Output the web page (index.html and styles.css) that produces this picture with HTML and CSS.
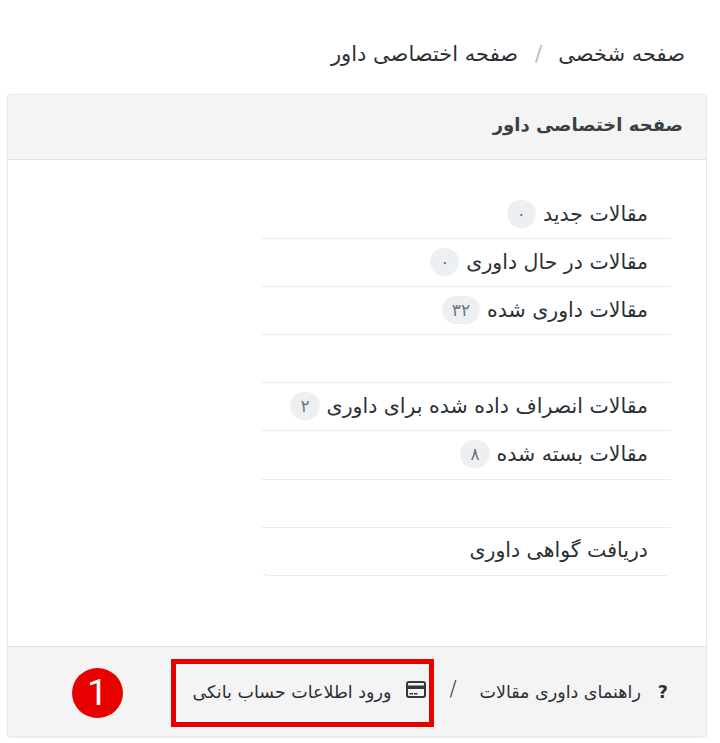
FILE: index.html
```html
<!DOCTYPE html>
<html lang="fa" dir="rtl">
<head>
    <meta charset="UTF-8">
    <meta name="viewport" content="width=device-width, initial-scale=1.0">
    <title>صفحه اختصاصی داور</title>
    <link rel="stylesheet" href="styles.css">
</head>
<body>
    <nav class="breadcrumb">
        <a href="#">صفحه شخصی</a>
        <span class="breadcrumb-sep">/</span>
        <span>صفحه اختصاصی داور</span>
    </nav>

    <div class="card">
        <div class="card-header">صفحه اختصاصی داور</div>
        <div class="card-body">
            <ul class="list">
                <li>مقالات جدید <span class="badge">۰</span></li>
                <li>مقالات در حال داوری <span class="badge">۰</span></li>
                <li>مقالات داوری شده <span class="badge">۳۲</span></li>
                <li></li>
                <li>مقالات انصراف داده شده برای داوری <span class="badge">۲</span></li>
                <li>مقالات بسته شده <span class="badge">۸</span></li>
                <li></li>
                <li>دریافت گواهی داوری</li>
            </ul>
        </div>
        <div class="card-footer">
            <b class="help-mark">?</b>
            <a href="#">راهنمای داوری مقالات</a>
            <span class="footer-sep">/</span>
            <a href="#" class="bank-link">
                <svg class="card-icon" width="20" height="17" viewBox="0 0 20 17">
                    <rect x="1" y="1" width="18" height="15" rx="2" fill="#f4f4f4" stroke="#33363a" stroke-width="2"/>
                    <rect x="1" y="4.5" width="18" height="3.5" fill="#33363a"/>
                    <rect x="3.5" y="12" width="3.5" height="1.5" fill="#33363a"/>
                    <rect x="8" y="12" width="3.5" height="1.5" fill="#33363a"/>
                </svg>
                ورود اطلاعات حساب بانکی
            </a>
            <div class="callout-box"></div>
            <div class="callout-num">1</div>
        </div>
    </div>
</body>
</html>
```

FILE: styles.css
```css
* {
    box-sizing: border-box;
}
body {
    margin: 0;
    padding: 0 13px 0 7px;
    height: 743px;
    overflow: hidden;
    background: #ffffff;
    color: #2b3035;
    font-family: "DejaVu Sans", "Noto Sans", sans-serif;
    font-size: 20px;
}
a {
    color: inherit;
    text-decoration: none;
}
.breadcrumb {
    display: flex;
    align-items: center;
    height: 94px;
    padding: 14px 22px 0 0;
    font-size: 21px;
}
.breadcrumb-sep {
    color: #b5bcc2;
    margin: 0 16px 0 17px;
}
.card {
    height: 643px;
    display: flex;
    flex-direction: column;
    border: 1px solid #e6e9ec;
    border-radius: 3px;
    box-shadow: 0 1px 2px rgba(0, 0, 0, 0.06);
}
.card-header {
    height: 65px;
    padding: 0 23px 6px;
    display: flex;
    align-items: center;
    background: #f4f4f4;
    border-bottom: 1px solid #e0e0e0;
    font-size: 18px;
    font-weight: bold;
    color: #3a3f44;
}
.card-body {
    flex: 1;
    padding: 31px 35px 0 0;
}
.list {
    list-style: none;
    margin: 0;
    padding: 0;
    width: 409px;
}
.list li {
    height: 48.1px;
    padding: 0 23px 2px 0;
    display: flex;
    align-items: center;
    gap: 7px;
    border-bottom: 1px solid #e9ebed;
    font-size: 20.5px;
}
.list li:last-child {
    border-radius: 0 0 6px 6px;
}
.badge {
    min-width: 28px;
    height: 28px;
    padding: 0 10px;
    border-radius: 14px;
    display: inline-flex;
    align-items: center;
    justify-content: center;
    background: #edf0f2;
    color: #6c757d;
    font-size: 17px;
}
.card-footer {
    position: relative;
    height: 90px;
    padding: 0 38px;
    display: flex;
    align-items: center;
    background: #f4f4f4;
    border-top: 1px solid #e0e0e0;
    font-size: 17.5px;
}
.help-mark {
    margin-left: 17px;
}
.footer-sep {
    margin: -6px 23px 0 23px;
    font-size: 21px;
    font-weight: 300;
}
.bank-link {
    display: flex;
    align-items: center;
    gap: 15px;
}
.card-icon {
    margin-top: -5px;
}
.callout-box {
    position: absolute;
    left: 163px;
    top: 12px;
    width: 263px;
    height: 68px;
    border: 5px solid #e80000;
}
.callout-num {
    position: absolute;
    left: 64px;
    top: 21px;
    width: 51px;
    height: 50px;
    border-radius: 50%;
    background: #e80000;
    color: #ffffff;
    font-family: Roboto, sans-serif;
    font-size: 37px;
    line-height: 50px;
    text-align: center;
}
```
